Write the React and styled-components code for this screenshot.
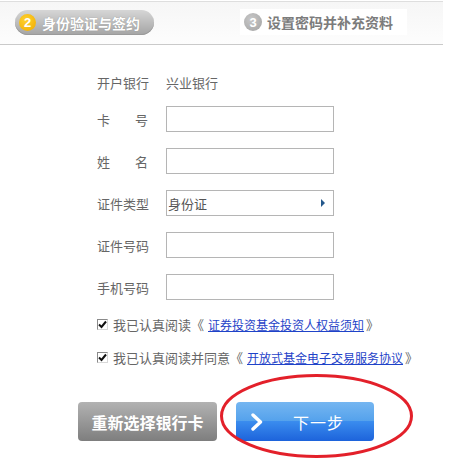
import React from 'react';
import styled, { createGlobalStyle } from 'styled-components';

const GlobalStyle = createGlobalStyle`
  body {
    margin: 0;
    background: #fff;
    font-family: "Noto Sans CJK SC", "Liberation Sans", sans-serif;
  }
`;

const Page = styled.div`
  position: relative;
  width: 469px;
  height: 460px;
  overflow: hidden;
`;

const Header = styled.div`
  display: flex;
  align-items: flex-start;
  width: 443px;
  height: 42px;
  margin-top: 1px;
  border-top: 1px solid #dedede;
  border-bottom: 1px solid #cacaca;
  background: linear-gradient(#f6f6f6, #fdfdfd);
  box-sizing: content-box;
`;

const ActiveStep = styled.div`
  display: flex;
  align-items: center;
  gap: 6px;
  width: 139px;
  height: 25px;
  margin: 8px 0 0 15px;
  padding-left: 4px;
  box-sizing: border-box;
  border-radius: 13px;
  background: linear-gradient(#d6d6d6, #a4a4a4);
  box-shadow: inset 0 -1px 0 #9a9a9a;
`;

const Step = styled.div`
  display: flex;
  align-items: center;
  gap: 5px;
  width: 167px;
  height: 26px;
  margin: 7px 0 0 86px;
  padding-left: 4px;
  box-sizing: border-box;
  background: #fff;
`;

const StepNum = styled.span`
  display: flex;
  align-items: center;
  justify-content: center;
  width: ${({ size }) => size}px;
  height: ${({ size }) => size}px;
  border-radius: 50%;
  background: ${({ active }) =>
    active ? 'radial-gradient(circle at 40% 35%, #ffd22e, #f0aa00)' : 'radial-gradient(circle at 40% 35%, #c8c8c8, #a2a2a2)'};
  color: #fff;
  font-family: "Liberation Sans", sans-serif;
  font-size: 13px;
  font-weight: bold;
`;

const StepText = styled.span`
  font-size: 14px;
  font-weight: bold;
  color: ${({ active }) => (active ? '#fff' : '#7c7c7c')};
  text-shadow: ${({ active }) => (active ? '0 0 1px #888' : 'none')};
  letter-spacing: 0;
  line-height: 1;
`;

const Form = styled.div`
  display: flex;
  flex-direction: column;
  padding: 24px 0 0 97px;
`;

const Row = styled.div`
  display: flex;
  align-items: center;
  height: 26px;
  margin-bottom: ${({ first }) => (first ? 11 : 16)}px;
`;

const Label = styled.span`
  display: flex;
  justify-content: space-between;
  width: 51px;
  margin-right: 18px;
  font-size: 13px;
  color: #666;
`;

const Value = styled.span`
  font-size: 13px;
  color: #666;
`;

const TextInput = styled.div`
  width: 168px;
  height: 26px;
  box-sizing: border-box;
  border: 1px solid #b5b5b5;
  background: #fff;
`;

const SelectBox = styled(TextInput)`
  display: flex;
  align-items: center;
  justify-content: space-between;
  padding: 0 8px 0 1px;
  font-size: 13px;
  color: #555;
`;

const Arrow = styled.span`
  width: 0;
  height: 0;
  border-top: 4px solid transparent;
  border-bottom: 4px solid transparent;
  border-left: 4px solid #24588c;
`;

const CheckRow = styled.div`
  display: flex;
  align-items: center;
  height: 20px;
  margin-top: ${({ first }) => (first ? -2 : 13)}px;
  font-size: 13px;
  color: #666;
  white-space: nowrap;
`;

const Box = styled.span`
  display: flex;
  align-items: center;
  justify-content: center;
  width: 11px;
  height: 11px;
  margin-right: 5px;
  box-sizing: border-box;
  border: 1px solid #8a8a8a;
  border-right-color: #d8d8d8;
  border-bottom-color: #d8d8d8;
  background: #fff;
`;

const Link = styled.a`
  margin: 0 2px 0 4px;
  font-size: 12px;
  color: #1f43c8;
  text-decoration: underline;
`;

const Buttons = styled.div`
  display: flex;
  gap: 19px;
  margin: 35px 0 0 78px;
`;

const Button = styled.div`
  display: flex;
  align-items: center;
  justify-content: ${({ blue }) => (blue ? 'flex-start' : 'center')};
  width: ${({ blue }) => (blue ? 138 : 139)}px;
  height: 39px;
  box-sizing: border-box;
  padding-left: ${({ blue }) => (blue ? 14 : 0)}px;
  border-radius: 4px;
  background: ${({ blue }) =>
    blue
      ? 'linear-gradient(#75b6f1 0%, #55a2ec 48%, #3a8cee 50%, #1d63db 100%)'
      : 'linear-gradient(#b2b2b2, #7e7e7e)'};
  color: #fff;
  font-size: 16px;
  font-weight: ${({ blue }) => (blue ? 'normal' : 'bold')};
  letter-spacing: ${({ blue }) => (blue ? 1 : 0)}px;
`;

const NextLabel = styled.span`
  margin-left: 29px;
`;

const Mark = styled.svg`
  position: absolute;
  left: 0;
  top: 0;
  pointer-events: none;
`;

const Check = () => (
  <svg width="9" height="9" viewBox="0 0 9 9">
    <path d="M1 4.5 L3.5 7 L8 1.5" fill="none" stroke="#111" strokeWidth="2" />
  </svg>
);

const Chevron = () => (
  <svg width="14" height="18" viewBox="0 0 14 18">
    <path d="M3 2 L10.5 9 L3 16" fill="none" stroke="#fff" strokeWidth="3.4" strokeLinecap="round" strokeLinejoin="round" />
  </svg>
);

const Spread = ({ text }) => (
  <Label>
    {text.split('').map((c, i) => (
      <span key={i}>{c}</span>
    ))}
  </Label>
);

function App() {
  return (
    <Page>
      <GlobalStyle />
      <Header>
        <ActiveStep>
          <StepNum size={17} active>2</StepNum>
          <StepText active>身份验证与签约</StepText>
        </ActiveStep>
        <Step>
          <StepNum size={18}>3</StepNum>
          <StepText>设置密码并补充资料</StepText>
        </Step>
      </Header>

      <Form>
        <Row first>
          <Spread text="开户银行" />
          <Value>兴业银行</Value>
        </Row>
        <Row>
          <Spread text="卡号" />
          <TextInput />
        </Row>
        <Row>
          <Spread text="姓名" />
          <TextInput />
        </Row>
        <Row>
          <Spread text="证件类型" />
          <SelectBox>
            身份证
            <Arrow />
          </SelectBox>
        </Row>
        <Row>
          <Spread text="证件号码" />
          <TextInput />
        </Row>
        <Row>
          <Spread text="手机号码" />
          <TextInput />
        </Row>

        <CheckRow first>
          <Box><Check /></Box>
          我已认真阅读《
          <Link>证券投资基金投资人权益须知</Link>》
        </CheckRow>
        <CheckRow>
          <Box><Check /></Box>
          我已认真阅读并同意《
          <Link>开放式基金电子交易服务协议</Link>》
        </CheckRow>
      </Form>

      <Buttons>
        <Button>重新选择银行卡</Button>
        <Button blue>
          <Chevron />
          <NextLabel>下一步</NextLabel>
        </Button>
      </Buttons>

      <Mark width="469" height="460">
        <ellipse cx="316.5" cy="416" rx="95" ry="40.5" fill="none" stroke="#e3202a" strokeWidth="3" />
      </Mark>
    </Page>
  );
}

export default App;
